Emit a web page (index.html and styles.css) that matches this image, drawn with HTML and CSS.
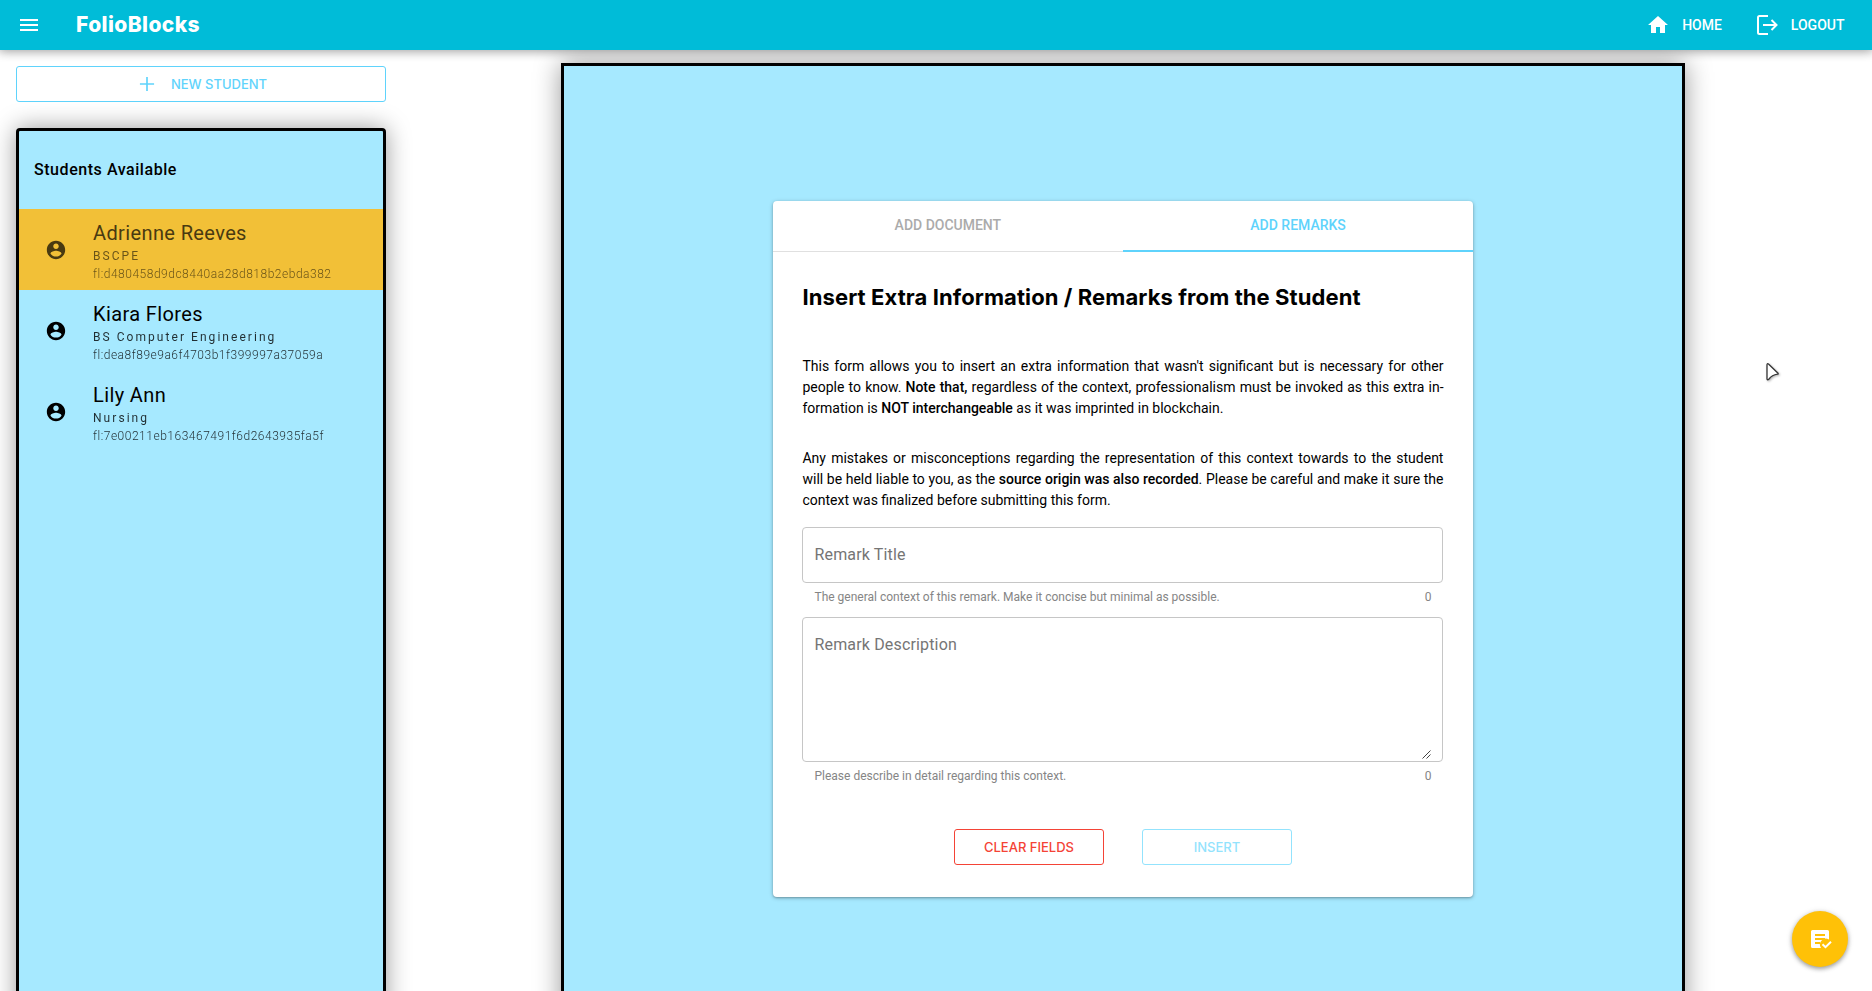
FILE: index.html
```html
<!DOCTYPE html>
<html lang="en">
<head>
<meta charset="utf-8">
<title>FolioBlocks</title>
<link rel="stylesheet" href="styles.css">
</head>
<body>
<header class="topbar">
  <svg class="menu-icon" viewBox="0 0 24 24"><path d="M3 18h18v-2H3v2zm0-5h18v-2H3v2zm0-7v2h18V6H3z"/></svg>
  <div class="brand"><span>FolioBlocks</span></div>
  <nav class="nav">
    <a class="nav-link"><svg viewBox="0 0 24 24"><path d="M10 20v-6h4v6h5v-8h3L12 3 2 12h3v8z"/></svg><span class="home-label">HOME</span></a>
    <a class="nav-link"><svg viewBox="0 0 24 24"><path fill="none" stroke="currentColor" stroke-width="2" d="M13 3H4.500Q3 3 3 4.500V19.500Q3 21 4.500 21H13M8 12H21M16.500 7L21.500 12L16.500 17"/></svg><span class="logout-label">LOGOUT</span></a>
  </nav>
</header>
<div class="page">
  <aside class="sidebar">
    <button class="btn new-btn"><svg viewBox="0 0 24 24"><path d="M20.500 13h-7.500v7.500h-2V13H3.500v-2H11V3.500h2V11h7.500z"/></svg><span class="new-label">NEW STUDENT</span></button>
    <section class="students">
      <h2 class="students-title"><span>Students Available</span></h2>
      <div class="student selected">
        <svg viewBox="0 0 24 24"><path d="M12 2C6.480 2 2 6.480 2 12s4.480 10 10 10 10-4.480 10-10S17.520 2 12 2zm0 3c1.660 0 3 1.340 3 3s-1.340 3-3 3-3-1.340-3-3 1.340-3 3-3zm0 14.200c-2.500 0-4.710-1.280-6-3.220.03-1.990 4-3.080 6-3.080s5.970 1.090 6 3.080c-1.290 1.940-3.500 3.220-6 3.220z"/></svg>
        <div class="student-info"><span class="name">Adrienne Reeves</span><span class="course">BSCPE</span><span class="address">fl:d480458d9dc8440aa28d818b2ebda382</span></div>
      </div>
      <div class="student">
        <svg viewBox="0 0 24 24"><path d="M12 2C6.480 2 2 6.480 2 12s4.480 10 10 10 10-4.480 10-10S17.520 2 12 2zm0 3c1.660 0 3 1.340 3 3s-1.340 3-3 3-3-1.340-3-3 1.340-3 3-3zm0 14.200c-2.500 0-4.710-1.280-6-3.220.03-1.990 4-3.080 6-3.080s5.970 1.090 6 3.080c-1.290 1.940-3.500 3.220-6 3.220z"/></svg>
        <div class="student-info"><span class="name">Kiara Flores</span><span class="course">BS Computer Engineering</span><span class="address">fl:dea8f89e9a6f4703b1f399997a37059a</span></div>
      </div>
      <div class="student">
        <svg viewBox="0 0 24 24"><path d="M12 2C6.480 2 2 6.480 2 12s4.480 10 10 10 10-4.480 10-10S17.520 2 12 2zm0 3c1.660 0 3 1.340 3 3s-1.340 3-3 3-3-1.340-3-3 1.340-3 3-3zm0 14.200c-2.500 0-4.710-1.280-6-3.220.03-1.990 4-3.080 6-3.080s5.970 1.090 6 3.080c-1.290 1.940-3.500 3.220-6 3.220z"/></svg>
        <div class="student-info"><span class="name">Lily Ann</span><span class="course">Nursing</span><span class="address">fl:7e00211eb163467491f6d2643935fa5f</span></div>
      </div>
    </section>
  </aside>
  <main class="panel">
    <div class="card">
      <div class="tabs">
        <div class="tab"><span>ADD DOCUMENT</span></div>
        <div class="tab active"><span>ADD REMARKS</span></div>
      </div>
      <form class="form">
        <h1 class="form-title"><span>Insert Extra Information / Remarks from the Student</span></h1>
        <p class="text">This form allows you to insert an extra information that wasn't significant but is necessary for other people to know. <b>Note that,</b> regardless of the context, professionalism must be invoked as this extra in&shy;formation is <b>NOT interchangeable</b> as it was imprinted in blockchain.</p>
        <p class="text">Any mistakes or misconceptions regarding the representation of this context towards to the student will be held liable to you, as the <b>source origin was also recorded</b>. Please be careful and make it sure the context was finalized before submitting this form.</p>
        <div class="field"><span>Remark Title</span></div>
        <div class="hint"><span>The general context of this remark. Make it concise but minimal as possible.</span><span>0</span></div>
        <div class="field area"><span>Remark Description</span><svg class="grip" viewBox="0 0 9 9"><path d="M.5 8.500l8-8M4.500 8.500l4-4"/></svg></div>
        <div class="hint"><span>Please describe in detail regarding this context.</span><span>0</span></div>
        <div class="actions">
          <button type="button" class="btn clear-btn"><span>CLEAR FIELDS</span></button>
          <button type="button" class="btn insert-btn"><span>INSERT</span></button>
        </div>
      </form>
    </div>
  </main>
</div>
<div class="fab"><svg viewBox="0 0 24 24"><path fill="#fff" d="M4.500 3h15A1.500 1.500 0 0 1 21 4.500V12.500A6 6 0 0 0 13 21H4.500A1.500 1.500 0 0 1 3 19.500v-15A1.500 1.500 0 0 1 4.500 3z"/><path fill="none" stroke="#ffc107" stroke-width="2" d="M7 8h10M7 12h10M7 16h5"/><path fill="none" stroke="#fff" stroke-width="2" d="M14.500 17.200l3 3L23 14.800"/></svg></div>
<svg class="pointer" viewBox="0 0 16 20"><path d="M2 3Q2 1 3.500 2L13 11.200Q13.500 12 12.500 12.200Q7 13 4 17Q2.500 18.500 2 17Z"/></svg>
</body>
</html>
```
FILE: styles.css
```css
* { box-sizing: border-box; }
body {
  margin: 0;
  height: 991px;
  overflow: hidden;
  background: #fff;
  color: #000;
  font-family: Roboto, "Liberation Sans", sans-serif;
  font-size: 14px;
}
svg { display: block; flex: none; fill: currentColor; }
.topbar {
  position: relative;
  z-index: 2;
  display: flex;
  align-items: center;
  height: 50px;
  padding: 0 27.500px 0 17px;
  background: #00bcd8;
  color: #fff;
  box-shadow: 0 0 10px 2px rgba(0,0,0,.2), 0 0 10px rgba(0,0,0,.24);
}
.menu-icon { width: 24px; height: 24px; }
.brand {
  margin-left: 35px;
  font: 800 21px/28px Inter, sans-serif;
  letter-spacing: .4px;
}
.nav { display: flex; gap: 33px; margin-left: auto; }
.nav-link { display: flex; align-items: center; gap: 12px; font-weight: 500; line-height: 24px; }
.nav-link svg { width: 24px; height: 24px; }
.page { display: flex; height: 941px; overflow: hidden; }
.sidebar { display: flex; flex-direction: column; width: 370px; margin: 16px 0 -40px 16px; }
.btn {
  display: flex;
  flex: none;
  align-items: center;
  justify-content: center;
  height: 36px;
  padding: 0;
  border: 1px solid;
  border-radius: 3px;
  background: #fff;
  font: 500 13px/20px Inter, sans-serif;
}
.new-btn { width: 370px; gap: 14px; padding-left: 2px; color: #5fd3fc; }
.new-btn svg { width: 20px; height: 20px; }
.students {
  flex: 1;
  margin-top: 26px;
  border: 3px solid #000;
  border-radius: 4px;
  background: #a6e9ff;
  box-shadow: 0 0 25px rgba(0,0,0,.4);
}
.students-title {
  margin: 0;
  padding: 27px 15px 0;
  height: 78px;
  font-size: 16px;
  font-weight: 500;
  line-height: 24px;
  letter-spacing: .55px;
}
.student { display: flex; align-items: center; height: 81px; padding-left: 26px; gap: 26px; }
.student svg { width: 22px; height: 22px; }
.student.selected { background: #f2c037; color: #493a11; }
.student-info { display: flex; flex-direction: column; padding-top: 4px; }
.name { font-size: 20px; line-height: 26px; letter-spacing: .38px; }
.course { font-size: 12px; line-height: 20px; letter-spacing: 2.050px; opacity: .8; }
.address { font-size: 12px; line-height: 17px; letter-spacing: .51px; font-weight: 300; opacity: .8; }
.panel {
  width: 1123.200px;
  margin: 13px 0 -40px 175.400px;
  padding: 135px 0 0 208.400px;
  border: 3px solid #000;
  background: #a6e9ff;
  box-shadow: 0 0 25px rgba(0,0,0,.4);
}
.card {
  width: 700.400px;
  height: 696px;
  border-radius: 4px;
  background: #fff;
  box-shadow: 0 1px 4px rgba(0,0,0,.25), 0 1px 2px rgba(0,0,0,.2);
}
.tabs { display: grid; grid-template-columns: 1fr 1fr; height: 51px; border-bottom: 1px solid #e0e0e0; }
.tab { height: 51px; text-align: center; line-height: 49px; font-weight: 500; color: #ababab; }
.active { color: #5fd3fc; border-bottom: 2px solid #5fd3fc; }
.form { padding: 0 29.700px; }
.form-title { margin: 28px 0 42px; font: 700 22px/34px Inter, sans-serif; letter-spacing: .09px; white-space: nowrap; }
.text { width: 641px; margin: 0 0 29px; font-size: 14px; line-height: 21px; text-align: justify; }
.text b { font-weight: 500; }
.text + .text { margin-bottom: 16px; }
.field {
  position: relative;
  height: 56px;
  padding: 0 11px;
  border: 1px solid #c6c6c6;
  border-radius: 4px;
  color: #757575;
  font-size: 16px;
  line-height: 53px;
  letter-spacing: .16px;
}
.area { height: 145px; margin-top: 7px; }
.grip { position: absolute; right: 11px; bottom: 2px; width: 9px; height: 9px; fill: none; stroke: #444; stroke-width: 1; }
.hint { display: flex; justify-content: space-between; padding: 0 12px; height: 27px; color: #858585; font-size: 12px; line-height: 28px; }
.actions { display: flex; justify-content: center; gap: 38px; margin-top: 40px; }
.actions .btn { width: 150px; }
.clear-btn { color: #f44336; }
.insert-btn { color: #93e3fd; }
.fab {
  position: absolute;
  left: 1792px;
  top: 911px;
  width: 56px;
  height: 56px;
  padding: 16px;
  border-radius: 50%;
  background: #ffc107;
  box-shadow: 0 2px 4px rgba(0,0,0,.3), 0 1px 6px rgba(0,0,0,.15);
}
.pointer { position: absolute; left: 1765px; top: 362px; width: 16px; height: 20px; fill: #fff; stroke: #333; stroke-width: 1.300; filter: drop-shadow(1px 1px 1px rgba(0,0,0,.3)); }
```
